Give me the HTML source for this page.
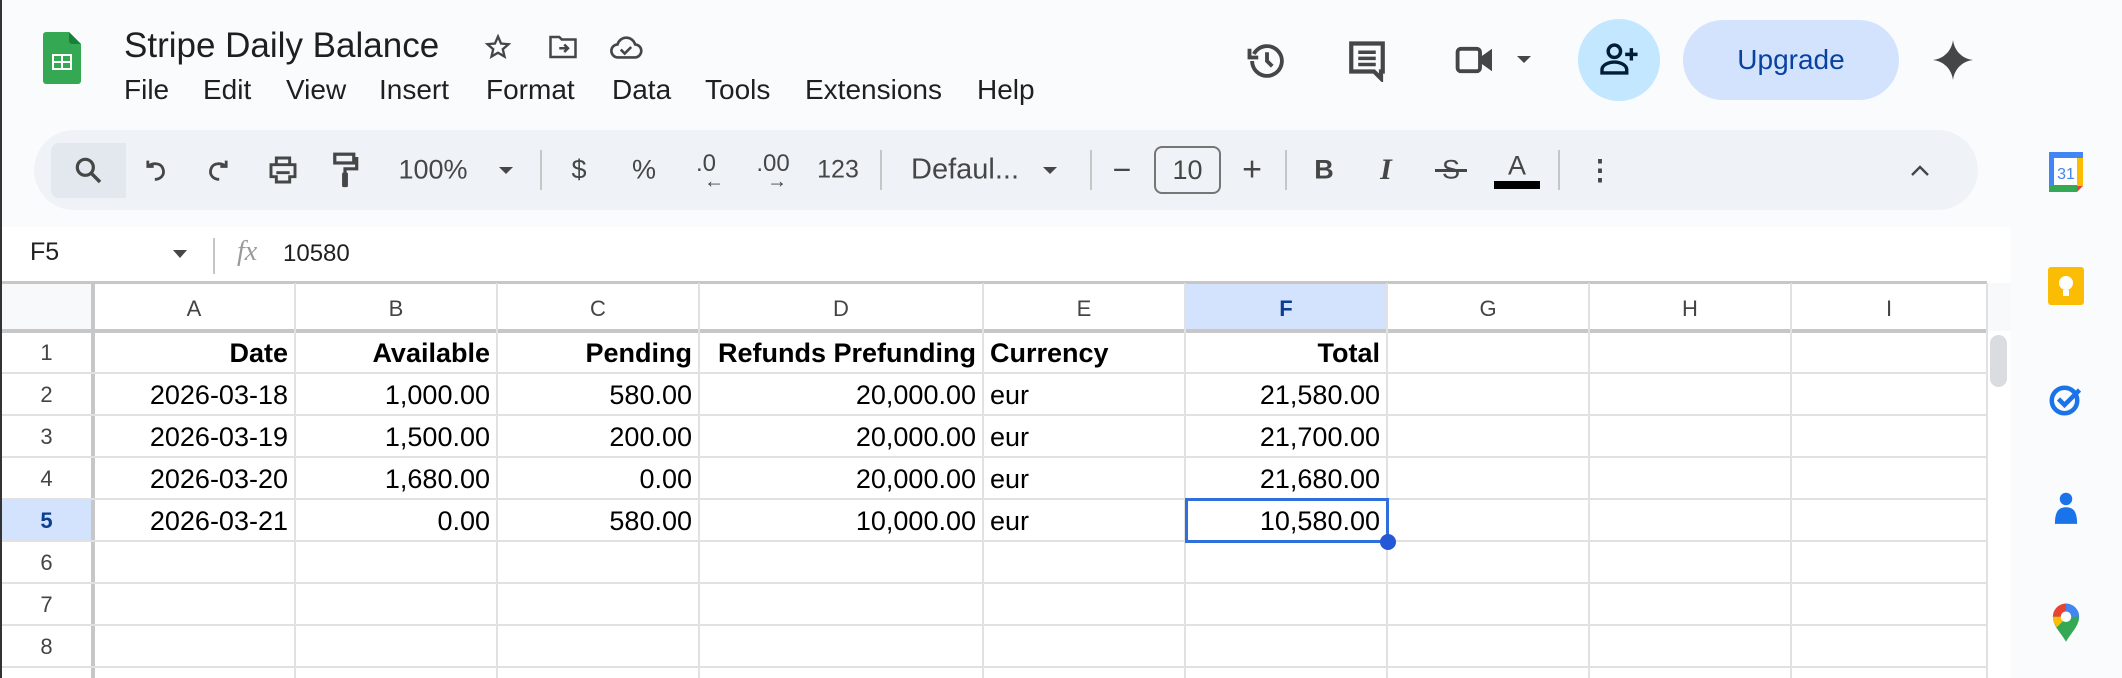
<!DOCTYPE html>
<html><head><meta charset="utf-8"><style>
*{margin:0;padding:0;box-sizing:border-box}
body{width:2122px;height:678px;overflow:hidden;background:#f9fbfd;font-family:"Liberation Sans",Arial,sans-serif;position:relative;color:#1f1f1f}
.a{position:absolute}
.menu{position:absolute;top:74px;font-size:28px;color:#1f1f1f}
.tb{position:absolute;top:130px;left:34px;width:1944px;height:80px;background:#eff3f8;border-radius:40px}
.t{position:absolute;font-size:27px;color:#444746;transform:translate(-50%,-50%);top:170px}
.sep{position:absolute;top:150px;width:2px;height:40px;background:#c4c7c5}
.cell{position:absolute;font-size:27px;color:#000;white-space:nowrap}
.hl{position:absolute;background:#e1e1e1}
.ch{position:absolute;top:296px;font-size:22px;color:#444;transform:translateX(-50%)}
.rh{position:absolute;left:0;width:93px;text-align:center;font-size:22px;color:#444}
</style></head><body>
<div class="a" style="left:0;top:0;width:2px;height:678px;background:#333"></div>
<svg class="a" style="left:43px;top:32px" width="38" height="52" viewBox="0 0 38 52"><path d="M3 0H26L38 12V49a3 3 0 0 1-3 3H3a3 3 0 0 1-3-3V3a3 3 0 0 1 3-3z" fill="#34a853"/><path d="M26 0L38 12H29a3 3 0 0 1-3-3z" fill="#188038"/><rect x="9" y="22" width="20" height="16" fill="#fff"/><rect x="11" y="24" width="7" height="5" fill="#34a853"/><rect x="20" y="24" width="7" height="5" fill="#34a853"/><rect x="11" y="31" width="7" height="5" fill="#34a853"/><rect x="20" y="31" width="7" height="5" fill="#34a853"/></svg>
<div class="a" style="left:124px;top:26px;font-size:35px;color:#1f1f1f">Stripe Daily Balance</div>
<svg class="a" style="left:484px;top:33px" width="28" height="28" viewBox="0 0 24 24"><path d="M12 3l2.6 6 6.4.6-4.9 4.3 1.5 6.3L12 16.9 6.4 20.2l1.5-6.3L3 9.6l6.4-.6z" fill="none" stroke="#444746" stroke-width="2"/></svg>
<svg class="a" style="left:548px;top:34px" width="30" height="26" viewBox="0 0 24 20"><path d="M2 2h7l2 2h11v14H2z" fill="none" stroke="#444746" stroke-width="2"/><path d="M9 11h7M13 8l3 3-3 3" fill="none" stroke="#444746" stroke-width="2"/></svg>
<svg class="a" style="left:609px;top:34px" width="34" height="26" viewBox="0 0 26 20"><path d="M7 18a5 5 0 0 1-.5-10A7 7 0 0 1 20 8a4.6 4.6 0 0 1-.5 10z" fill="none" stroke="#444746" stroke-width="2"/><path d="M9 12l3 3 5-5" fill="none" stroke="#444746" stroke-width="2"/></svg>
<div class="menu" style="left:124px">File</div><div class="menu" style="left:203px">Edit</div><div class="menu" style="left:286px">View</div><div class="menu" style="left:379px">Insert</div><div class="menu" style="left:486px">Format</div><div class="menu" style="left:612px">Data</div><div class="menu" style="left:705px">Tools</div><div class="menu" style="left:805px">Extensions</div><div class="menu" style="left:977px">Help</div>
<svg class="a" style="left:1246px;top:40px" width="42" height="42" viewBox="0 0 24 24"><path d="M4.5 8A8.5 8.5 0 1 1 3.5 12" fill="none" stroke="#444746" stroke-width="2.2"/><path d="M2 5v5h5" fill="none" stroke="#444746" stroke-width="2.2"/><path d="M12 7v5l3 3" fill="none" stroke="#444746" stroke-width="2.2"/></svg>
<svg class="a" style="left:1347px;top:40px" width="40" height="42" viewBox="0 0 22 24"><path d="M2 2h18v16h-1v4l-4-4H2z" fill="none" stroke="#444746" stroke-width="2.4"/><path d="M6 7h10M6 10.5h10M6 14h10" stroke="#444746" stroke-width="2"/></svg>
<svg class="a" style="left:1455px;top:44px" width="42" height="32" viewBox="0 0 26 20"><rect x="1.5" y="3" width="14" height="14" rx="2" fill="none" stroke="#444746" stroke-width="2.4"/><path d="M16 8l7-5v14l-7-5z" fill="#444746"/></svg>
<div class="a" style="left:1517px;top:56px;border-left:7px solid transparent;border-right:7px solid transparent;border-top:7px solid #444746"></div>
<div class="a" style="left:1578px;top:19px;width:82px;height:82px;border-radius:50%;background:#c2e7ff"></div>
<svg class="a" style="left:1600px;top:42px" width="38" height="34" viewBox="0 0 24 22"><circle cx="9" cy="6" r="4" fill="none" stroke="#001d35" stroke-width="2.2"/><path d="M1 20v-2c0-3 4-5 8-5s8 2 8 5v2z" fill="none" stroke="#001d35" stroke-width="2.2"/><path d="M20 4v8M16 8h8" stroke="#001d35" stroke-width="2.2"/></svg>
<div class="a" style="left:1683px;top:20px;width:216px;height:80px;border-radius:40px;background:#d3e3fd;color:#0842a0;font-size:28px;text-align:center;line-height:80px">Upgrade</div>
<svg class="a" style="left:1933px;top:40px" width="40" height="40" viewBox="0 0 24 24"><path d="M12 0C12.8 6.5 17.5 11.2 24 12 17.5 12.8 12.8 17.5 12 24 11.2 17.5 6.5 12.8 0 12 6.5 11.2 11.2 6.5 12 0z" fill="#444746"/></svg>
<div class="tb"></div>
<div class="a" style="left:51px;top:143px;width:75px;height:55px;background:#e3e8ef;border-radius:8px 0 0 8px"></div>
<svg class="a" style="left:72px;top:154px" width="32" height="32" viewBox="0 0 24 24"><circle cx="10" cy="10" r="6" fill="none" stroke="#444746" stroke-width="2.4"/><path d="M14.5 14.5L21 21" stroke="#444746" stroke-width="2.6"/></svg>
<svg class="a" style="left:142px;top:156px" width="28" height="28" viewBox="0 0 24 24"><path d="M5 4v5h5" fill="none" stroke="#444746" stroke-width="2.4"/><path d="M5.5 9C8 6 16 5 18 11s-3 9-7 9" fill="none" stroke="#444746" stroke-width="2.4"/></svg>
<svg class="a" style="left:204px;top:156px" width="28" height="28" viewBox="0 0 24 24"><path d="M19 4v5h-5" fill="none" stroke="#444746" stroke-width="2.4"/><path d="M18.5 9C16 6 8 5 6 11s3 9 7 9" fill="none" stroke="#444746" stroke-width="2.4"/></svg>
<svg class="a" style="left:267px;top:154px" width="32" height="32" viewBox="0 0 24 24"><path d="M7 3h10v5H7z M3 8h18v9h-4v4H7v-4H3z" fill="none" stroke="#444746" stroke-width="2.2"/><path d="M7 14h10" stroke="#444746" stroke-width="2.2"/></svg>
<svg class="a" style="left:331px;top:152px" width="28" height="38" viewBox="0 0 18 26"><rect x="2" y="1.5" width="13" height="6" fill="none" stroke="#444746" stroke-width="2.2"/><path d="M15 4.5h2v7H9v3" fill="none" stroke="#444746" stroke-width="2.2"/><rect x="7" y="14" width="4" height="10" rx="1" fill="#444746"/></svg>
<div class="t" style="left:433px">100%</div>
<div class="a" style="left:499px;top:167px;border-left:7px solid transparent;border-right:7px solid transparent;border-top:7px solid #444746"></div>
<div class="sep" style="left:540px"></div>
<div class="t" style="left:579px">$</div><div class="t" style="left:644px">%</div>
<div class="t" style="left:706px;font-size:24px;top:164px">.0</div><div class="t" style="left:714px;font-size:20px;top:182px">←</div>
<div class="t" style="left:773px;font-size:24px;top:164px">.00</div><div class="t" style="left:777px;font-size:20px;top:182px">→</div>
<div class="t" style="left:838px;font-size:25px">123</div>
<div class="sep" style="left:880px"></div>
<div class="t" style="left:965px;font-size:29px">Defaul...</div>
<div class="a" style="left:1043px;top:167px;border-left:7px solid transparent;border-right:7px solid transparent;border-top:7px solid #444746"></div>
<div class="sep" style="left:1090px"></div>
<div class="t" style="left:1122px;font-size:32px">−</div>
<div class="a" style="left:1154px;top:146px;width:67px;height:48px;border:2px solid #747775;border-radius:8px;font-size:27px;text-align:center;line-height:44px;color:#444746">10</div>
<div class="t" style="left:1252px;font-size:34px">+</div>
<div class="sep" style="left:1285px"></div>
<div class="t" style="left:1324px;font-weight:bold">B</div>
<div class="t" style="left:1386px;font-style:italic;font-family:'Liberation Serif',serif;font-size:30px;font-weight:bold">I</div>
<div class="t" style="left:1451px;">S</div><div class="a" style="left:1435px;top:169px;width:32px;height:3px;background:#444746"></div>
<div class="t" style="left:1517px;top:166px">A</div><div class="a" style="left:1494px;top:181px;width:46px;height:8px;background:#000"></div>
<div class="sep" style="left:1558px"></div>
<div class="t" style="left:1600px;font-weight:bold;font-size:28px">⋮</div>
<svg class="a" style="left:1908px;top:162px" width="24" height="16" viewBox="0 0 24 16"><path d="M4 13l8-8 8 8" fill="none" stroke="#444746" stroke-width="2.4"/></svg>
<svg class="a" style="left:2049px;top:152px" width="34" height="40" viewBox="0 0 34 40"><rect x="0" y="0" width="34" height="40" rx="3" fill="#fff"/><rect x="0" y="0" width="34" height="6" fill="#4285f4"/><rect x="0" y="0" width="5" height="34" fill="#4285f4"/><rect x="0" y="33" width="28" height="7" fill="#34a853"/><rect x="28" y="6" width="6" height="28" fill="#fbbc04"/><path d="M28 34h6l-6 6z" fill="#ea4335"/><text x="17" y="27" font-size="16" text-anchor="middle" fill="#4285f4" font-family="Liberation Sans">31</text></svg>
<svg class="a" style="left:2048px;top:267px" width="36" height="38" viewBox="0 0 36 38"><rect width="36" height="38" rx="3" fill="#fbbc04"/><circle cx="18" cy="16" r="7" fill="#fff"/><rect x="15" y="23" width="6" height="6" fill="#fff"/></svg>
<svg class="a" style="left:2048px;top:381px" width="36" height="36" viewBox="0 0 24 24"><circle cx="11" cy="13" r="8.5" fill="none" stroke="#1a73e8" stroke-width="3"/><path d="M7 12l4 4 10-10" fill="none" stroke="#1a73e8" stroke-width="3"/></svg>
<svg class="a" style="left:2052px;top:492px" width="28" height="36" viewBox="0 0 20 26"><circle cx="10" cy="5" r="4.5" fill="#1a73e8"/><path d="M2 23c0-8 2-12 8-12s8 4 8 12z" fill="#1a73e8"/></svg>
<svg class="a" style="left:2050px;top:601px" width="32" height="42" viewBox="0 0 24 32"><path d="M12 31C8 24 2 19 2 12a10 10 0 0 1 20 0c0 7-6 12-10 19z" fill="#34a853"/><path d="M2 12a10 10 0 0 1 10-10v6a4 4 0 0 0-4 4z" fill="#ea4335"/><path d="M12 2a10 10 0 0 1 10 10h-6a4 4 0 0 0-4-4z" fill="#4285f4"/><path d="M2 12c0 3 1 5 3 8l5-5a4 4 0 0 1-2-3z" fill="#fbbc04"/><circle cx="12" cy="12" r="4" fill="#fff"/></svg>
<div class="a" style="left:2px;top:227px;width:2009px;height:451px;background:#fff"></div>
<div class="a" style="left:30px;top:238px;font-size:25px">F5</div>
<div class="a" style="left:173px;top:250px;border-left:7px solid transparent;border-right:7px solid transparent;border-top:8px solid #444746"></div>
<div class="a" style="left:213px;top:238px;width:2px;height:36px;background:#c4c7c5"></div>
<div class="a" style="left:237px;top:236px;font-size:28px;font-style:italic;font-family:'Liberation Serif',serif;color:#999">fx</div>
<div class="a" style="left:283px;top:240px;font-size:24px">10580</div>
<div class="a" style="left:2px;top:283px;width:1985px;height:48px;background:#fff"></div>
<div class="a" style="left:2px;top:283px;width:91px;height:48px;background:#f8f9fa"></div>
<div class="a" style="left:1185px;top:283px;width:202px;height:48px;background:#d3e3fd"></div>
<div class="a" style="left:2px;top:499px;width:91px;height:42px;background:#d3e3fd"></div>
<div class="hl" style="left:2px;top:281px;width:1985px;height:3px;background:#c7c7c7"></div>
<div class="hl" style="left:2px;top:329px;width:1985px;height:4px;background:#c7c7c7"></div>
<div class="hl" style="left:91px;top:283px;width:4px;height:395px;background:#c7c7c7"></div>
<div class="hl" style="left:2px;top:372px;width:1985px;height:2px"></div>
<div class="hl" style="left:2px;top:414px;width:1985px;height:2px"></div>
<div class="hl" style="left:2px;top:456px;width:1985px;height:2px"></div>
<div class="hl" style="left:2px;top:498px;width:1985px;height:2px"></div>
<div class="hl" style="left:2px;top:540px;width:1985px;height:2px"></div>
<div class="hl" style="left:2px;top:582px;width:1985px;height:2px"></div>
<div class="hl" style="left:2px;top:624px;width:1985px;height:2px"></div>
<div class="hl" style="left:2px;top:666px;width:1985px;height:2px"></div>
<div class="hl" style="left:294px;top:283px;width:2px;height:395px"></div>
<div class="hl" style="left:496px;top:283px;width:2px;height:395px"></div>
<div class="hl" style="left:698px;top:283px;width:2px;height:395px"></div>
<div class="hl" style="left:982px;top:283px;width:2px;height:395px"></div>
<div class="hl" style="left:1184px;top:283px;width:2px;height:395px"></div>
<div class="hl" style="left:1386px;top:283px;width:2px;height:395px"></div>
<div class="hl" style="left:1588px;top:283px;width:2px;height:395px"></div>
<div class="hl" style="left:1790px;top:283px;width:2px;height:395px"></div>
<div class="hl" style="left:1986px;top:283px;width:2px;height:395px"></div>
<div class="a" style="left:1988px;top:283px;width:23px;height:48px;background:#f8f9fa"></div>
<div class="a" style="left:1990px;top:335px;width:17px;height:52px;background:#dadce0;border-radius:9px"></div>
<div class="ch" style="left:194px">A</div><div class="ch" style="left:396px">B</div><div class="ch" style="left:598px">C</div><div class="ch" style="left:841px">D</div><div class="ch" style="left:1084px">E</div><div class="ch" style="left:1286px;font-weight:bold;color:#0b3d91">F</div><div class="ch" style="left:1488px">G</div><div class="ch" style="left:1690px">H</div><div class="ch" style="left:1889px">I</div>
<div class="rh" style="top:340px">1</div><div class="rh" style="top:382px">2</div><div class="rh" style="top:424px">3</div><div class="rh" style="top:466px">4</div><div class="rh" style="top:508px;font-weight:bold;color:#0b3d91">5</div><div class="rh" style="top:550px">6</div><div class="rh" style="top:592px">7</div><div class="rh" style="top:634px">8</div>
<div class="cell" style="right:1834px;top:338px;font-weight:bold">Date</div>
<div class="cell" style="right:1632px;top:338px;font-weight:bold">Available</div>
<div class="cell" style="right:1430px;top:338px;font-weight:bold">Pending</div>
<div class="cell" style="right:1146px;top:338px;font-weight:bold">Refunds Prefunding</div>
<div class="cell" style="left:990px;top:338px;font-weight:bold">Currency</div>
<div class="cell" style="right:742px;top:338px;font-weight:bold">Total</div>
<div class="cell" style="right:1834px;top:380px">2026-03-18</div><div class="cell" style="right:1632px;top:380px">1,000.00</div><div class="cell" style="right:1430px;top:380px">580.00</div><div class="cell" style="right:1146px;top:380px">20,000.00</div><div class="cell" style="left:990px;top:380px">eur</div><div class="cell" style="right:742px;top:380px">21,580.00</div>
<div class="cell" style="right:1834px;top:422px">2026-03-19</div><div class="cell" style="right:1632px;top:422px">1,500.00</div><div class="cell" style="right:1430px;top:422px">200.00</div><div class="cell" style="right:1146px;top:422px">20,000.00</div><div class="cell" style="left:990px;top:422px">eur</div><div class="cell" style="right:742px;top:422px">21,700.00</div>
<div class="cell" style="right:1834px;top:464px">2026-03-20</div><div class="cell" style="right:1632px;top:464px">1,680.00</div><div class="cell" style="right:1430px;top:464px">0.00</div><div class="cell" style="right:1146px;top:464px">20,000.00</div><div class="cell" style="left:990px;top:464px">eur</div><div class="cell" style="right:742px;top:464px">21,680.00</div>
<div class="cell" style="right:1834px;top:506px">2026-03-21</div><div class="cell" style="right:1632px;top:506px">0.00</div><div class="cell" style="right:1430px;top:506px">580.00</div><div class="cell" style="right:1146px;top:506px">10,000.00</div><div class="cell" style="left:990px;top:506px">eur</div><div class="cell" style="right:742px;top:506px">10,580.00</div>
<div class="a" style="left:1185px;top:498px;width:204px;height:45px;border:3px solid #2f6fdb"></div>
<div class="a" style="left:1380px;top:534px;width:16px;height:16px;border-radius:50%;background:#2458d6"></div>
</body></html>
